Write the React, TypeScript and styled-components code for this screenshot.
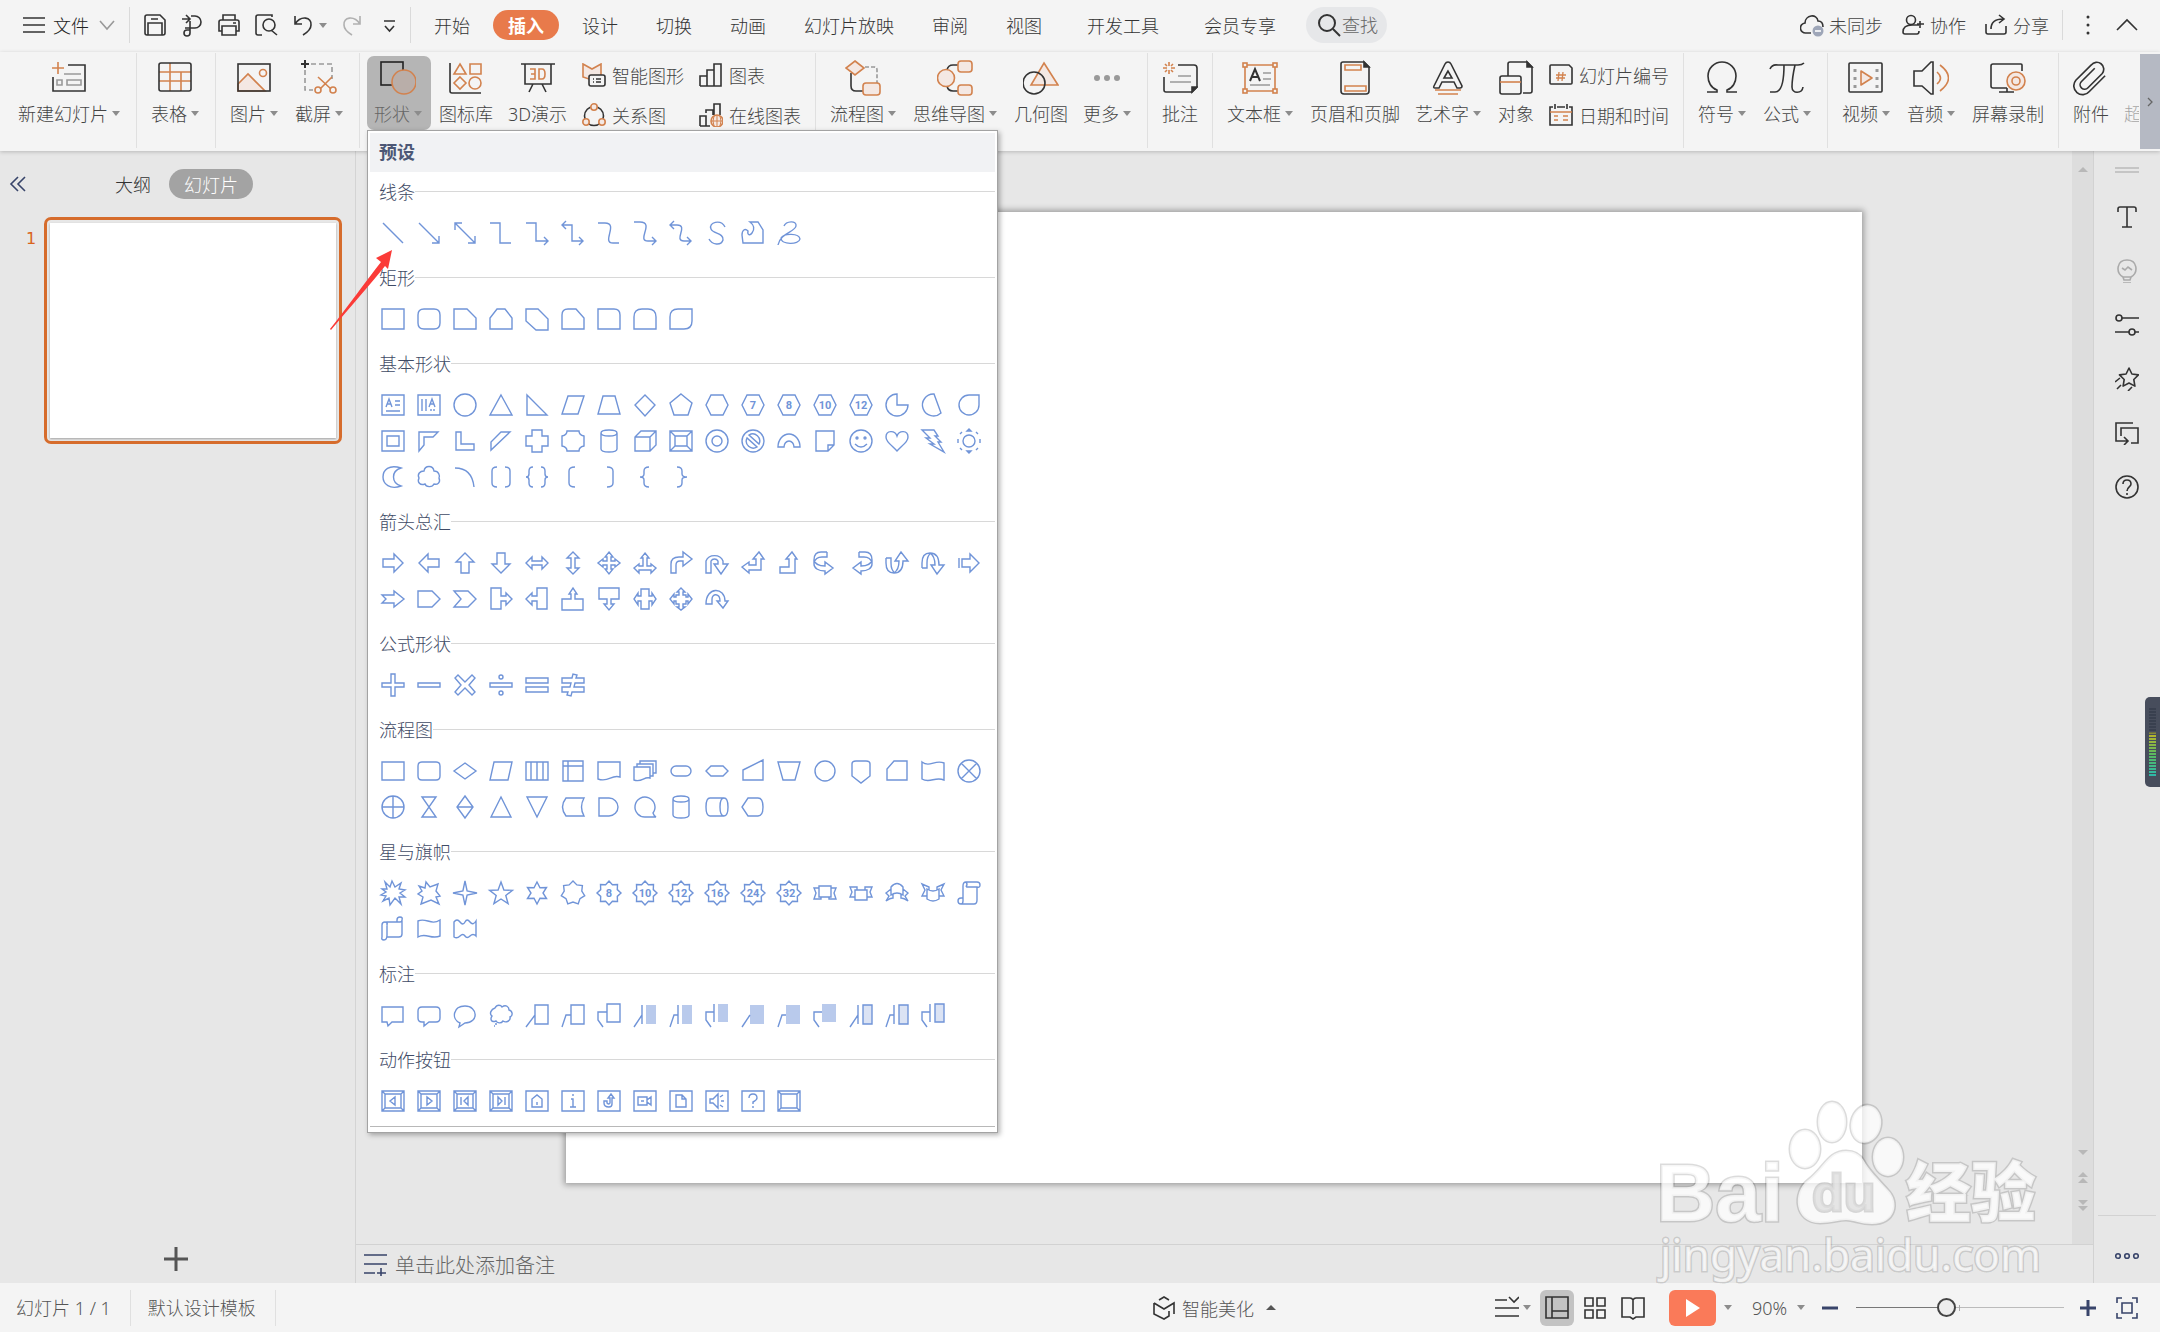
import React from "react";
import styled, { createGlobalStyle } from "styled-components";

const font = `"Noto Sans", "Noto Sans CJK SC", sans-serif`;
const dark = "#333333";
const orange = "#d2824e";
const soft = "#f4e8e3";
const gray = "#999999";
const blue = "#7094d8";
const navy = "#38446a";

const Global = createGlobalStyle`
  *, *::before, *::after { box-sizing: border-box; }
  body { margin: 0; background: #e7e7e7; font-family: ${font}; font-size: 18px; font-weight: 300; color: #444; }
  button, input, select { font: inherit; color: inherit; background: none; border: 0; padding: 0; margin: 0; }
  button { cursor: pointer; white-space: nowrap; }
  svg { display: block; flex: none; }
`;

/* ---------- shared pieces ---------- */

const Shell = styled.div`
  position: relative;
  display: flex;
  flex-direction: column;
  min-height: 100vh;
  overflow-x: clip;
`;

const Caret = styled.span<{ $up?: boolean; $color?: string; $half?: number }>`
  flex: none;
  width: 0;
  height: 0;
  border: ${(p) => p.$half ?? 4}px solid transparent;
  border-bottom-width: ${(p) => (p.$up ? 5 : 0)}px;
  border-top-width: ${(p) => (p.$up ? 0 : 5)}px;
  border-bottom-color: ${(p) => (p.$up ? p.$color ?? "#8c8c8c" : "transparent")};
  border-top-color: ${(p) => (p.$up ? "transparent" : p.$color ?? "#8c8c8c")};
`;

const VRule = styled.span<{ $h: number }>`
  flex: none;
  width: 1px;
  height: ${(p) => p.$h}px;
  background: #dadada;
`;

const IconButton = styled.button<{ $faded?: boolean }>`
  display: flex;
  align-items: center;
  justify-content: center;
  width: 24px;
  height: 24px;
  flex: none;
  opacity: ${(p) => (p.$faded ? 0.35 : 1)};
`;

const Ico = ({ children, s = 24, c = dark, w = 1.6 }: { children: React.ReactNode; s?: number; c?: string; w?: number }) => (
  <svg width={s} height={s} viewBox={`0 0 ${s} ${s}`} fill="none" stroke={c} strokeWidth={w} aria-hidden="true">
    {children}
  </svg>
);

/* ---------- title bar ---------- */

const TitleBar = styled.header`
  display: flex;
  align-items: center;
  height: 52px;
  padding: 0 21px 2px 22px;
  background: #f4f4f4;
`;

const FileButton = styled.button`
  display: flex;
  align-items: center;
  gap: 7px;
  margin-right: 9px;
  color: #222;
`;

const QuickBar = styled.div`
  display: flex;
  align-items: center;
  gap: 13px;
  padding: 0 9px 0 13px;
`;

const UndoGroup = styled.div`
  display: flex;
  align-items: center;
  gap: 4px;
`;

const Tabs = styled.nav<{ $gap: number; $left: number }>`
  display: flex;
  gap: ${(p) => p.$gap}px;
  margin-left: ${(p) => p.$left}px;
`;

const Tab = styled.button<{ $active?: boolean }>`
  height: 30px;
  padding: 0 15px;
  border-radius: 15px;
  color: ${(p) => (p.$active ? "#fff" : "#333")};
  font-weight: ${(p) => (p.$active ? 700 : 300)};
  background: ${(p) => (p.$active ? "#e87a4b" : "transparent")};
`;

const SearchBox = styled.label`
  display: flex;
  align-items: center;
  gap: 1px;
  height: 36px;
  margin-left: 15px;
  padding: 0 9px 0 11px;
  border-radius: 18px;
  background: #e6e7e9;
  input { width: 36px; outline: 0; }
  input::placeholder { color: #666; opacity: 1; }
`;

const AccountBar = styled.div`
  display: flex;
  align-items: center;
  gap: 18px;
  margin-left: auto;
  margin-right: 13px;
`;

const AccountButton = styled.button`
  display: flex;
  align-items: center;
  gap: 5px;
`;

const WindowBar = styled.div`
  display: flex;
  gap: 15px;
  margin-left: 13px;
`;

/* ---------- ribbon ---------- */

const RibbonBar = styled.div`
  position: relative;
  z-index: 5;
  display: flex;
  height: 99px;
  padding-top: 1px;
  background: #f4f4f4;
  box-shadow: 0 1px 4px rgba(0, 0, 0, 0.2);
`;

const Group = styled.div<{ $first?: boolean; $last?: boolean }>`
  display: flex;
  align-items: flex-start;
  gap: 1px;
  height: 95px;
  padding: 3px 7px 0 ${(p) => (p.$first ? 11 : 7)}px;
  border-right: ${(p) => (p.$last ? 0 : 1)}px solid #e0e0e0;
  flex: ${(p) => (p.$last ? "1 1 0" : "none")};
  min-width: 0;
  overflow: ${(p) => (p.$last ? "hidden" : "visible")};
`;

const BigButton = styled.button<{ $caret?: boolean; $active?: boolean; $faded?: boolean }>`
  display: flex;
  flex-direction: column;
  align-items: center;
  flex: none;
  height: 74px;
  padding: 4px ${(p) => (p.$caret ? 9 : 7)}px 0 7px;
  border-radius: 7px;
  color: ${(p) => (p.$active ? "#666" : "#444")};
  background: ${(p) => (p.$active ? "#b5b5b5" : "transparent")};
  opacity: ${(p) => (p.$faded ? 0.45 : 1)};
`;

const BigLabel = styled.span`
  display: flex;
  align-items: center;
  gap: 4px;
  height: 34px;
`;

const Stack = styled.div`
  display: flex;
  flex-direction: column;
  flex: none;
`;

const SmallButton = styled.button`
  display: flex;
  align-items: center;
  gap: 6px;
  height: 40px;
  padding: 0 7px 2px;
  color: #444;
`;

const MenuAnchor = styled.div`
  position: relative;
`;

const RibbonScroll = styled.button`
  width: 20px;
  height: 95px;
  margin: 1px 0 0 1px;
  display: flex;
  align-items: center;
  justify-content: center;
  background: #b5b9c3;
`;

const ribbonIcons: Record<string, React.ReactNode> = {
  newSlide: (
    <Ico s={36}>
      <path d="M17 5H34V31H2V17" />
      <path d="M7 2V14M1 8H13" stroke={orange} />
      <path d="M13 14H30M6 20H11V25H6ZM16 20H30V25H16Z" stroke={gray} />
    </Ico>
  ),
  table: (
    <Ico s={36}>
      <path d="M13 3V31M2 12H34M2 21H34M24 12V31" stroke={orange} />
      <rect x="2" y="3" width="32" height="28" rx="2" />
    </Ico>
  ),
  picture: (
    <Ico s={36}>
      <path d="M2 24L12 14L29 31H2Z" stroke={orange} fill={soft} />
      <circle cx="27" cy="13" r="3.5" stroke={orange} />
      <rect x="2" y="4" width="32" height="27" />
    </Ico>
  ),
  screenshot: (
    <Ico s={36}>
      <path d="M10 4H31V19M4 10V30H12" stroke={gray} strokeDasharray="5 3" />
      <path d="M4 0V8M0 4H8" strokeWidth="2" />
      <path d="M17 17L30 29M31 17L19 29" stroke={orange} />
      <circle cx="17" cy="30" r="3" stroke={orange} />
      <circle cx="32" cy="30" r="3" stroke={orange} />
    </Ico>
  ),
  shapes: (
    <Ico s={36} c="#222">
      <rect x="1" y="2" width="22" height="23" />
      <circle cx="24" cy="22" r="12" stroke={orange} fill="#b9aea9" />
    </Ico>
  ),
  iconLib: (
    <Ico s={36}>
      <path d="M2 3V31Q2 33 4 33H33" />
      <path d="M12 4L18 14H6ZM22 4H33V14H22ZM12 17L18 23L12 29L6 23Z" stroke={orange} />
      <circle cx="27" cy="23" r="6" stroke={orange} />
    </Ico>
  ),
  demo3d: (
    <Ico s={36}>
      <path d="M1 4H35M5 4V24H31V4M13 24L9 32M22 24L26 32" />
      <path d="M10 9H15V19H10M11 14H15M19 9H22Q25 9 25 14T22 19H19Z" stroke={orange} />
    </Ico>
  ),
  smart: (
    <Ico>
      <path d="M1 1L10 6L19 1V14L10 17L1 14Z" stroke={orange} fill={soft} />
      <rect x="7" y="12" width="16" height="11" rx="2" fill="#f4f4f4" />
      <path d="M11 16H12M14 16H19M11 19H12M14 19H19" />
    </Ico>
  ),
  relation: (
    <Ico>
      <circle cx="12" cy="13" r="9.5" />
      {[[12, 4], [4, 19], [20, 19]].map(([x, y]) => (
        <circle key={x} cx={x} cy={y} r="3.2" stroke={orange} fill={soft} />
      ))}
    </Ico>
  ),
  chart: (
    <Ico>
      <path d="M1 23V13H8V23M8 23V7H15V23M15 23V1H22V23ZM1 23H22" />
    </Ico>
  ),
  onlineChart: (
    <Ico>
      <path d="M1 23V13H7V23M7 10V7H14V12M15 12V1H21V12M1 23H11" />
      <circle cx="18" cy="18" r="6" stroke={orange} fill={soft} />
      <path d="M12 18H24M18 12V24M15 13Q13 18 15 23M21 13Q23 18 21 23" stroke={orange} strokeWidth="1" />
    </Ico>
  ),
  flow: (
    <Ico s={36}>
      <path d="M6 13V26Q6 31 11 31H18" />
      <path d="M20 7H29Q32 7 32 10V23" stroke={gray} strokeDasharray="4 2" />
      <path d="M10 1L19 8L10 15L1 8Z" stroke={orange} fill={soft} />
      <rect x="18" y="23" width="17" height="12" rx="3" stroke={orange} fill={soft} />
    </Ico>
  ),
  mind: (
    <Ico s={36}>
      <path d="M10 10Q11 5 16 5H21M10 26Q11 31 16 31H21" />
      <circle cx="9" cy="18" r="8.5" stroke={orange} fill={soft} />
      <rect x="21" y="1" width="14" height="11" rx="3" stroke={orange} fill={soft} />
      <rect x="21" y="25" width="14" height="10" rx="3" stroke={orange} fill={soft} />
    </Ico>
  ),
  geometry: (
    <Ico s={36}>
      <path d="M21 3L35 25H8Z" stroke={orange} fill={soft} />
      <circle cx="11" cy="23" r="11" />
    </Ico>
  ),
  more: (
    <Ico s={36}>
      {[8, 18, 28].map((x) => (
        <circle key={x} cx={x} cy="18" r="3" fill={gray} stroke="none" />
      ))}
    </Ico>
  ),
  comment: (
    <Ico s={36}>
      <path d="M16 5H32Q35 5 35 8V27L30 32H4Q2 32 2 30V17" />
      <path d="M35 27H30V32Z" fill={dark} />
      <path d="M16 16H29M8 22H29" stroke={gray} />
      <path d="M7 2V6M7 10V14M1 8H5M9 8H13M3 4L5 6M9 10L11 12M11 4L9 6M5 10L3 12" stroke={orange} />
    </Ico>
  ),
  textBox: (
    <Ico s={36}>
      <path d="M3 5H33V31H3Z" stroke={orange} />
      {[[3, 5], [33, 5], [3, 31], [33, 31]].map(([x, y]) => (
        <rect key={`${x}${y}`} x={x - 2} y={y - 2} width="4" height="4" stroke={orange} fill="#f4f4f4" />
      ))}
      <path d="M8 21L13 9L18 21M10 17H16" strokeWidth="2" />
      <path d="M21 13H29M21 19H29M8 25H28" stroke={gray} />
    </Ico>
  ),
  headerFooter: (
    <Ico s={36}>
      <path d="M6 2H27L32 7V31Q32 34 29 34H7Q4 34 4 31V4Q4 2 6 2Z" />
      <path d="M27 2V7H32Z" fill={dark} />
      <path d="M8 5H24V10H8ZM8 26H29V31H8Z" stroke={orange} />
    </Ico>
  ),
  wordArt: (
    <Ico s={36}>
      <path d="M18 2Q20 2 21 4L32 26Q32 28 30 28H27L24 22H12L9 28H5Q3 28 4 26L15 4Q16 2 18 2ZM18 11L14 18H22Z" />
      <path d="M5 30H31M8 34H28" stroke={orange} />
    </Ico>
  ),
  object: (
    <Ico s={36}>
      <path d="M10 16V4Q10 2 12 2H29L34 7V31Q34 33 32 33H25" />
      <path d="M29 2V7H34Z" fill={dark} />
      <rect x="2" y="16" width="21" height="18" rx="2" />
      <path d="M2 22H23" stroke={orange} />
    </Ico>
  ),
  slideNo: (
    <Ico>
      <path d="M2 2H20L23 5V20Q23 21 22 21H2Q1 21 1 20V3Q1 2 2 2Z" />
      <path d="M10 9L9 18M14 9L13 18M7 12H17M7 15H16" stroke={orange} strokeWidth="1.3" />
    </Ico>
  ),
  date: (
    <Ico>
      <path d="M4 4H1V22H23V4H20M8 4H16M6 1V6M18 1V6" />
      <path d="M1 9H23M5 13H9M14 13H19M5 17H9M14 17H19" stroke={orange} />
    </Ico>
  ),
  omega: (
    <Ico s={36}>
      <path d="M3 32H13V30C7 28 4 22 4 16A14 14 0 0 1 32 16C32 22 29 28 23 30V32H33" />
    </Ico>
  ),
  pi: (
    <Ico s={36}>
      <path d="M1 9Q3 4 9 5H29Q33 5 35 3M15 5C15 18 13 32 6 32H1M26 5C24 14 23 22 23 27C23 34 33 34 34 27" />
    </Ico>
  ),
  video: (
    <Ico s={36}>
      <rect x="1" y="3" width="33" height="29" rx="1" />
      <path d="M13 11L24 18L13 25Z" stroke={orange} fill={soft} strokeLinejoin="round" />
      <path d="M7 9V28M29 9V28" stroke={gray} strokeWidth="3" strokeDasharray="3 5" />
    </Ico>
  ),
  audio: (
    <Ico s={36}>
      <path d="M1 11H9L18 2H20V34H18L9 26H1Z" />
      <path d="M24 12Q31 18 24 24M27 5Q44 18 27 31" stroke={orange} />
    </Ico>
  ),
  record: (
    <Ico s={36}>
      <path d="M32 11V5Q32 4 31 4H3Q1 4 1 6V26Q1 28 3 28H17M9 32H24M17 28V32" />
      <circle cx="26" cy="21" r="9" stroke={orange} fill={soft} />
      <circle cx="26" cy="21" r="4" stroke={orange} />
    </Ico>
  ),
  clip: (
    <svg width="36" height="36" viewBox="0 0 24 24" fill="none" stroke={dark} strokeWidth="1.1" aria-hidden="true">
      <path d="m22.4 9.5-10.5 10.5a5.500 5.500 0 0 1-9-7.500l10.300-10.200A4.500 4.500 0 0 1 20.500 8l-9.500 9.500a3 3 0 0 1-4.500-4l9-9" transform="translate(-1 1)" />
    </svg>
  ),
  link: (
    <Ico s={36} c={gray}>
      <path d="M22 11A7 7 0 0 0 10 11V22" />
    </Ico>
  ),
};

type BigProps = { icon: string; label: string; caret?: boolean; faded?: boolean; active?: boolean };

const Big = ({ icon, label, caret, faded, active }: BigProps) => (
  <BigButton $caret={caret} $faded={faded} $active={active} aria-expanded={active}>
    {ribbonIcons[icon]}
    <BigLabel>
      {label}
      {caret && <Caret />}
    </BigLabel>
  </BigButton>
);

const Small = ({ items }: { items: [string, string][] }) => (
  <Stack>
    {items.map(([icon, label]) => (
      <SmallButton key={icon}>
        {ribbonIcons[icon]}
        {label}
      </SmallButton>
    ))}
  </Stack>
);

/* ---------- shape gallery ---------- */

type Shape = string | { d: string; t?: string; soft?: string; pale?: boolean; turn?: number; mirror?: "x" | "y" };

const star = (n: number, outer: number, inner: number, cx = 12, cy = 12) =>
  "M" +
  Array.from({ length: n * 2 }, (_, i) => {
    const r = i % 2 ? inner : outer;
    const a = (Math.PI * i) / n - Math.PI / 2;
    return `${(cx + r * Math.cos(a)).toFixed(1)} ${(cy + r * Math.sin(a)).toFixed(1)}`;
  }).join("L") +
  "Z";
const ring = (cx: number, cy: number, rx: number, ry = rx) =>
  `M${cx - rx} ${cy}a${rx} ${ry} 0 1 0 ${rx * 2} 0a${rx} ${ry} 0 1 0 ${-rx * 2} 0Z`;

const hexagon = "M6 2H18L23 12L18 22H6L1 12Z";
const badge = star(8, 12, 9);
const right = "M2 8H13V3L22 12L13 21V16H2Z";
const leftRight = "M1 12L7 6V10H17V6L23 12L17 18V14H7V18Z";
const bent = "M2 22V13Q2 6 10 6H14V1L23 8L14 15V10H11Q7 10 7 14V22Z";
const uturn = "M1 22V10A9 8 0 0 1 18 10V13H23L16 23L9 13H13V10A4 4 0 0 0 6 10V22Z";
const curved = "M14 1H8C3 1 1 4 1 9V13C1 17 5 20 12 20V23L20 17L12 11V15C6 15 2 13 1 9M14 1V6H9C5 6 2 8 1 12";
const swoop = "M1 7V12C1 19 4 22 9 22C15 22 18 18 18 10H23L16 1L10 10H14C14 15 12 20 9 22M1 7H6V12C6 17 7 20 10 22";
const frame = "M1 2H23V22H1ZM4 5H20V19H4ZM1 2L4 5M23 2L20 5M1 22L4 19M23 22L20 19";
const plain = "M1 2H23V22H1Z";
const scroll = "M6 20V5Q6 1 9 1H20Q23 1 23 4T20 6H9M20 6V19Q20 23 17 23H4Q1 23 1 20T4 17H6M6 20Q6 23 4 23M9 6Q11 3 9 1";
const sidePlug = "M2 1H12V9H17V6L23 12L17 18V14H12V22H2Z";

const sections: [string, Shape[]][] = [
  ["线条", [
    "M2 2L22 22",
    "M2 2L22 22M22 15V22H15",
    "M2 2L22 22M22 15V22H15M2 9V2H9",
    "M1 2H11V22H22",
    "M1 2H11V20H23M19 16L23 20L19 24",
    "M1 4H11V20H22M18 16L22 20L18 24M5 0L1 4L5 8",
    "M1 2H8C22 2 4 22 16 22H22",
    "M1 1H7C22 1 3 20 15 20H23M19 16L23 20L19 24",
    "M1 4H8C20 4 4 20 15 20H22M18 16L22 20L18 24M5 0L1 4L5 8",
    "M20 6C16 -2 3 1 6 8C8 13 19 12 18 19C16 25 7 24 4 18",
    "M2 22H22V9L17 1H9C13 4 14 8 11 12C9 15 6 14 7 10C4 7 1 9 1 14Z",
    "M7 5C9 0 20 -1 19 5C18 11 3 12 1 24M4 17C7 12 22 12 23 18C22 24 4 24 4 17Z",
  ]],
  ["矩形", [
    plain,
    "M7 2H17Q23 2 23 8V16Q23 22 17 22H7Q1 22 1 16V8Q1 2 7 2Z",
    "M1 2H14L23 11V22H1Z",
    "M1 22V11L8 2H16L23 11V22Z",
    "M1 2H13L23 12V23H11L1 14Z",
    "M1 22V8Q1 2 7 2H15L23 11V22Z",
    "M1 2H17Q23 2 23 8V22H1Z",
    "M1 22V10Q1 2 9 2H15Q23 2 23 10V22Z",
    "M1 22V10Q1 2 9 2H23V14Q23 22 15 22Z",
  ]],
  ["基本形状", [
    plain + "M5 14L8 6L11 14M6 11H10M14 8H19M14 12H19M5 18H19",
    plain + "M5 6V18M9 6V18M12 14L15 6L18 14M13 11H17M14 16V18M17 16V18",
    ring(12, 12, 11),
    "M12 2L23 22H1Z",
    "M2 2L22 22H2Z",
    "M7 3H23L17 21H1Z",
    "M6 3H18L23 21H1Z",
    "M12 2L22 12L12 23L2 12Z",
    "M12 1L23 10L19 22H5L1 10Z",
    hexagon,
    { d: hexagon, t: "7" },
    { d: hexagon, t: "8" },
    { d: hexagon, t: "10" },
    { d: hexagon, t: "12" },
    "M12 1A11 11 0 1 0 23 12H12Z",
    "M13 1A11 11 0 1 0 20 20Z",
    "M22 2V12A10 10 0 1 1 12 2Z",
    "M1 2H23V22H1ZM6 7H18V17H6Z",
    "M2 3H21L16 8H7V16L2 22Z",
    "M3 3H8V15H21V21H3Z",
    "M12 3H21L2 21V13Z",
    "M7 1H17V7H23V17H17V23H7V17H1V7H7Z",
    "M6 2H18Q18 6 23 7V17Q18 18 18 22H6Q6 18 1 17V7Q6 6 6 2Z",
    "M4 4V20Q4 23 12 23T20 20V4Q20 1 12 1T4 4Q4 7 12 7T20 4",
    "M2 8L8 2H23V16L17 22H2ZM2 8H17V22M17 8L23 2",
    "M1 2H23V22H1ZM6 7H18V17H6ZM1 2L6 7M23 2L18 7M1 22L6 17M23 22L18 17",
    ring(12, 12, 11) + ring(12, 12, 5),
    ring(12, 12, 11) + "M6 9A7 7 0 0 0 16 18ZM8 6A7 7 0 0 1 18 15Z",
    "M1 18A11 13 0 0 1 23 18H17A5 6 0 0 0 7 18Z",
    "M3 2H21V16L15 22H3ZM21 16H15V22",
    ring(12, 12, 11) + ring(8, 9, 1) + ring(16, 9, 1) + "M6 15Q12 21 18 15",
    "M12 22C4 14 1 12 1 8C1 1 10 1 12 7C14 1 23 1 23 8C23 12 20 14 12 22Z",
    "M1 1H13L17 7H14L20 13H17L23 23L9 15H13L5 9H9Z",
    ring(12, 12, 6) + "M10 2L12 0L14 2ZM10 22L12 24L14 22ZM1 10V14M23 10V14M3 5L5 3M19 3L21 5M3 19L5 21M19 21L21 19",
    "M20 3C8 -1 2 5 2 12S9 25 20 21C10 18 10 6 20 3Z",
    "M7 6C8 0 16 0 17 6C22 6 23 11 22 13C24 18 20 20 17 19C15 23 9 22 8 19C3 21 0 17 2 13C0 9 3 6 7 6Z",
    "M2 3Q19 3 21 22",
    "M8 2Q3 2 3 6V18Q3 22 8 22M16 2Q21 2 21 6V18Q21 22 16 22",
    "M8 2Q4 2 4 6V9Q4 12 1 12Q4 12 4 15V18Q4 22 8 22M16 2Q20 2 20 6V9Q20 12 23 12Q20 12 20 15V18Q20 22 16 22",
    "M14 2Q8 2 8 6V18Q8 22 14 22",
    "M10 2Q16 2 16 6V18Q16 22 10 22",
    "M16 2Q11 2 11 6V9Q11 12 7 12Q11 12 11 15V18Q11 22 16 22",
    "M8 2Q13 2 13 6V9Q13 12 18 12Q13 12 13 15V18Q13 22 8 22",
  ]],
  ["箭头总汇", [
    right,
    { d: right, turn: 180 },
    { d: right, turn: 270 },
    { d: right, turn: 90 },
    leftRight,
    { d: leftRight, turn: 90 },
    "M12 1L16 6H14V10H18V8L23 12L18 16V14H14V18H16L12 23L8 18H10V14H6V16L1 12L6 8V10H10V6H8Z",
    "M12 2L16 7H14V15H18V13L23 17L18 22V19H6V22L1 17L6 13V15H10V7H8Z",
    bent,
    uturn,
    "M18 1L23 8H20V19H8V22L1 16L8 11V14H15V8H12Z",
    "M15 1L20 8H18V22H3V16H12V8H9Z",
    curved,
    { d: curved, mirror: "x" },
    swoop,
    { d: swoop, mirror: "y" },
    "M2 7V17M5 8V16H13V21L22 12L13 3V8Z",
    "M1 8H13V4L23 12L13 20V16H1L5 12Z",
    "M1 4H15L23 12L15 20H1Z",
    "M1 4H15L23 12L15 20H1L8 12Z",
    sidePlug,
    { d: sidePlug, mirror: "x" },
    "M1 12H10V7H8L12 1L16 7H14V12H22V23H1Z",
    "M2 1H22V12H14V17H17L12 23L7 17H10V12H2Z",
    "M8 2H16V9H19V6L23 12L19 18V14H16V22H8V14H5V18L1 12L5 6V9H8Z",
    "M12 1L16 5H14V8H17V10H19V7L23 12L19 17V14H17V17H14V20H16L12 23L8 20H10V17H7V14H5V17L1 12L5 7V10H7V8H10V5H8Z",
    "M1 17C1 -1 20 0 20 14H23L18 21L12 14H15C15 6 7 6 7 12V17Z",
  ]],
  ["公式形状", [
    "M10 1H14V10H23V14H14V23H10V14H1V10H10Z",
    "M1 10H23V14H1Z",
    "M5 2L12 9L19 2L22 5L16 12L22 19L19 22L12 15L5 22L2 19L8 12L2 5Z",
    "M1 10H23V14H1Z" + ring(12, 4, 2) + ring(12, 20, 2),
    "M1 5H23V10H1ZM1 14H23V19H1Z",
    "M1 5H11L12 1L16 2L15 5H23V10H14L13 14H23V19H11L10 23L6 22L7 19H1V14H9L10 10H1Z",
  ]],
  ["流程图", [
    "M1 3H23V21H1Z",
    "M5 3H19Q23 3 23 7V17Q23 21 19 21H5Q1 21 1 17V7Q1 3 5 3Z",
    "M12 4L23 12L12 20L1 12Z",
    "M5 3H23L19 21H1Z",
    "M1 3H23V21H1ZM6 3V21M18 3V21M12 3V21",
    "M2 2H22V22H2ZM7 2V22M2 7H22",
    "M1 3H23V18C14 15 12 24 1 20Z",
    "M1 8H17V19C11 17 9 24 1 21ZM4 8V5H20V17H17M7 5V2H23V14H20",
    "M7 7H17A5 5 0 0 1 17 17H7A5 5 0 0 1 7 7Z",
    "M6 7H18L23 12L18 17H6L1 12Z",
    "M2 11L22 1V21H2Z",
    "M1 3H23L18 21H6Z",
    ring(12, 12, 10),
    "M3 5Q3 2 7 2H17Q21 2 21 5V17L12 24L3 17Z",
    "M9 2H22V21H2V10Z",
    "M1 3C9 9 14 0 23 4V21C14 17 9 25 1 20Z",
    ring(12, 12, 11) + "M4 4L20 20M20 4L4 20",
    ring(12, 12, 11) + "M12 1V23M1 12H23",
    "M5 2H19L5 22H19Z",
    "M12 1L20 12L12 23L4 12ZM4 12H20",
    "M12 2L22 22H2Z",
    "M2 2H22L12 22Z",
    "M5 3H23Q18 12 23 21H5Q-2 12 5 3Z",
    "M2 3H12A9 9 0 0 1 12 21H2Z",
    "M13 22A10 10 0 1 1 20 18Q21 21 23 22Z",
    "M4 4V20Q4 23 12 23T20 20V4Q20 1 12 1T4 4Q4 7 12 7T20 4",
    "M5 3H19Q23 3 23 12T19 21H5Q1 21 1 12T5 3M19 3Q15 3 15 12T19 21",
    "M7 3H17Q22 3 22 12T17 21H7L1 12Z",
  ]],
  ["星与旗帜", [
    "M4 1L9 6L11 0L14 6L20 2L18 8L24 9L19 12L24 16L18 16L20 23L14 17L9 24L8 17L2 20L5 15L0 14L5 11L1 8L6 8Z",
    "M9 1L13 6L21 3L19 10L23 15L19 16L22 23L14 19L4 23L6 16L1 13L5 10L2 5L8 7Z",
    star(4, 12, 3),
    star(5, 12, 5, 12, 13),
    star(6, 11, 6),
    star(7, 12, 9),
    { d: badge, t: "8" },
    { d: badge, t: "10" },
    { d: badge, t: "12" },
    { d: badge, t: "16" },
    { d: badge, t: "24" },
    { d: badge, t: "32" },
    "M6 5H18V16H6ZM6 7H1L3 12L1 18H8V16M18 7H23L21 12L23 18H16V16",
    "M6 9H18V19H6ZM8 9V6H1L3 11L1 16H6M16 9V6H23L21 11L23 16H18",
    "M6 6Q12 -1 18 6V14Q12 10 6 14ZM6 8L1 12L4 15L1 20Q5 17 8 17V13M18 8L23 12L20 15L23 20Q19 17 16 17V13",
    "M6 8Q12 12 18 8V18Q12 22 6 18ZM8 9V6L1 3L4 9L1 15L6 15M16 9V6L23 3L20 9L23 15L18 15",
    scroll,
    "M6 5V18Q6 23 3 23T1 20V8Q1 5 4 5T6 8V5H16V3Q16 0 19 0T21 3V17Q21 20 18 20H6M16 5H19Q21 5 21 3",
    "M1 4C9 0 14 9 23 3V19C14 23 9 15 1 20Z",
    "M1 5Q4 1 7 5T12 5T17 5T23 4V19Q20 16 17 19T12 19T7 19T1 20Z",
  ]],
  ["标注", [
    "M1 4H22V19H11L7 23L6 19H1Z",
    "M5 4H19Q23 4 23 8V15Q23 19 19 19H12L7 23L7 19H5Q1 19 1 15V8Q1 4 5 4Z",
    "M7 20C-2 16 0 3 12 3C25 3 26 20 12 20L6 24Z",
    "M6 5C8 1 12 2 13 4C17 1 20 4 20 7C24 8 24 13 21 14C22 18 17 20 14 18C12 21 8 20 7 18C2 20 1 16 3 13C0 11 2 6 6 5ZM6 21H8M5 23H6",
    "M10 2H23V21H10ZM1 24L10 12",
    "M10 2H23V21H10ZM10 12H5L1 24",
    "M10 1H23V19H10ZM10 9H1V17L6 24",
    { d: "M9 2V21M1 24L9 12", soft: "M13 2H23V21H13Z" },
    { d: "M9 2V21M9 12H5L1 24", soft: "M13 2H23V21H13Z" },
    { d: "M9 1V19M9 9H1V17L6 24", soft: "M13 1H23V19H13Z" },
    { d: "M1 24L9 12", soft: "M9 2H23V21H9Z" },
    { d: "M9 12H5L1 24", soft: "M9 2H23V21H9Z" },
    { d: "M9 9H1V17L6 24", soft: "M9 1H23V19H9Z" },
    { d: "M9 2V21M1 24L9 12M14 2H23V21H14Z", soft: "M14 2H23V21H14Z", pale: true },
    { d: "M9 2V21M9 12H5L1 24M14 2H23V21H14Z", soft: "M14 2H23V21H14Z", pale: true },
    { d: "M9 1V19M9 9H1V17L6 24M14 1H23V19H14Z", soft: "M14 1H23V19H14Z", pale: true },
  ]],
  ["动作按钮", [
    frame + "M14 8V16L9 12Z",
    frame + "M10 8V16L15 12Z",
    frame + "M8 8V16M15 8V16L11 12Z",
    frame + "M16 8V16M9 8V16L13 12Z",
    plain + "M7 18V10L12 6L17 10V18ZM12 13V16",
    plain + "M12 5V7M10 10H12V18M9 18H15",
    plain + "M12 18Q7 18 7 14V12H10V14Q12 16 13 14V9H11L14 5L17 9H15V15Q15 18 12 18Z",
    plain + "M5 8H14V16H5ZM14 11L18 8V16L14 13M8 12H11",
    plain + "M7 6H13L17 10V18H7ZM13 6V10H17",
    plain + "M5 10H8L13 5V19L8 14H5ZM15 8L18 6M16 12H19M15 16L18 18",
    plain + "M8 9Q8 5 12 5T16 9Q16 11 12 13V15M12 17V19",
    frame,
  ]],
];

const Menu = styled.div`
  position: absolute;
  top: 100%;
  left: 0;
  width: 631px;
  padding: 2px 2px 5px;
  border: 1px solid #a3a3a3;
  background: #fff;
  box-shadow: 2px 2px 5px rgba(0, 0, 0, 0.3);
`;

const MenuTitle = styled.h2`
  margin: 0;
  padding-left: 9px;
  height: 39px;
  line-height: 39px;
  font-size: 18px;
  font-weight: 700;
  color: #4c5775;
  background: #f1f2f4;
`;

const Section = styled.section`
  padding-bottom: 7px;
`;

const SectionTitle = styled.h3`
  display: flex;
  align-items: center;
  height: 43px;
  margin: 0;
  padding: 0 0 6px 9px;
  font-size: 18px;
  font-weight: 300;
  color: #3f4b66;
  &::after { content: ""; flex: 1; height: 1px; margin-top: 2px; background: #d8d8d8; }
`;

const ShapeGrid = styled.div`
  display: grid;
  grid-template-columns: repeat(17, 36px);
  grid-auto-rows: 36px;
  padding-left: 5px;
`;

const ShapeButton = styled.button`
  display: flex;
  align-items: center;
  justify-content: center;
`;

const MenuEnd = styled.div`
  height: 1px;
  background: #b8b8b8;
`;

const Pointer = styled.svg`
  position: absolute;
  left: -40px;
  top: 118px;
`;

const ShapeIcon = ({ shape }: { shape: Shape }) => {
  const s = typeof shape === "string" ? { d: shape } : shape;
  const transform = s.turn
    ? `rotate(${s.turn} 12 12)`
    : s.mirror === "x"
      ? "translate(24 0) scale(-1 1)"
      : s.mirror === "y"
        ? "translate(0 24) scale(1 -1)"
        : undefined;
  return (
    <svg width="24" height="24" viewBox="0 0 24 24" overflow="visible" fill="none" stroke={blue} strokeWidth="1.4" aria-hidden="true">
      {s.soft && <path d={s.soft} fill={s.pale ? "#dbe3f4" : "#b9caec"} stroke="none" />}
      <path d={s.d} transform={transform} />
      {s.t && (
        <text x="12" y="16" textAnchor="middle" fontFamily="Roboto, sans-serif" fontWeight="700" fontSize="11" fill={blue} stroke="none">
          {s.t}
        </text>
      )}
    </svg>
  );
};

const ShapeMenu = () => (
  <Menu>
    <MenuTitle>预设</MenuTitle>
    {sections.map(([name, shapes]) => (
      <Section key={name}>
        <SectionTitle>{name}</SectionTitle>
        <ShapeGrid>
          {shapes.map((shape, i) => (
            <ShapeButton key={i} aria-label={`${name} ${i + 1}`}>
              <ShapeIcon shape={shape} />
            </ShapeButton>
          ))}
        </ShapeGrid>
      </Section>
    ))}
    <MenuEnd />
    <Pointer width="70" height="84" viewBox="0 0 70 84" aria-hidden="true">
      <path d="M64 1L48 9L53 13C38 32 18 60 2 80L3 81C22 58 42 36 57 17L60 20Z" fill="#fb3b38" />
    </Pointer>
  </Menu>
);

/* ---------- work area ---------- */

const Work = styled.main`
  flex: 1;
  display: grid;
  grid-template-columns: 356px minmax(0, 1fr) 66px;
  background: #e7e7e7;
`;

const SlidePanel = styled.aside`
  display: flex;
  flex-direction: column;
  border-right: 1px solid #d4d4d4;
`;

const PanelHead = styled.div`
  display: flex;
  align-items: center;
  padding: 18px 0 0 6px;
`;

const PanelTab = styled.button<{ $active?: boolean }>`
  height: 30px;
  padding: 0 15px;
  border-radius: 15px;
  color: ${(p) => (p.$active ? "#fff" : "#333")};
  background: ${(p) => (p.$active ? "#a3a3a3" : "transparent")};
`;

const PanelTabs = styled.div`
  display: flex;
  gap: 3px;
  margin-left: 70px;
`;

const ThumbRow = styled.div`
  display: flex;
  padding: 18px 13px 0 26px;
`;

const ThumbNumber = styled.span`
  width: 18px;
  padding-top: 12px;
  font-family: "DejaVu Sans", sans-serif;
  font-size: 16px;
  font-weight: 400;
  line-height: 20px;
  color: #d9641c;
`;

const Thumb = styled.button`
  flex: 1;
  height: 227px;
  padding: 3px;
  border: 3px solid #d66c2c;
  border-radius: 7px;
`;

const ThumbPage = styled.span`
  display: block;
  height: 100%;
  background: #fff;
  box-shadow: 0 1px 2px rgba(0, 0, 0, 0.3);
`;

const AddSlide = styled.button`
  align-self: center;
  width: 24px;
  height: 24px;
  margin: auto 3px 12px 0;
`;

const Editor = styled.div`
  display: flex;
  flex-direction: column;
`;

const CanvasRow = styled.div`
  flex: 1;
  display: flex;
`;

const Canvas = styled.div`
  flex: 1;
  display: flex;
  padding: 61px 210px;
`;

const Page = styled.div`
  flex: 1;
  background: #fff;
  box-shadow: 0 0 6px 2px rgba(0, 0, 0, 0.32);
`;

const ScrollBar = styled.div`
  display: flex;
  flex-direction: column;
  align-items: center;
  justify-content: space-between;
  width: 22px;
  padding: 16px 0 33px;
  border-right: 1px solid #d2d2d2;
  background: #dddddd;
`;

const ScrollButton = styled.button`
  display: flex;
  flex-direction: column;
  gap: 1px;
`;

const ScrollEnd = styled.div`
  display: flex;
  flex-direction: column;
  gap: 17px;
`;

const Notes = styled.label`
  display: flex;
  align-items: center;
  gap: 8px;
  height: 39px;
  padding: 2px 0 0 7px;
  border-top: 1px solid #d2d2d2;
  border-right: 1px solid #d2d2d2;
  font-size: 20px;
  input { flex: 1; outline: 0; }
  input::placeholder { color: #666; opacity: 1; }
`;

const SideBar = styled.aside`
  display: flex;
  flex-direction: column;
  align-items: center;
  gap: 23px;
  padding-top: 7px;
`;

const SideTools = styled.div`
  display: flex;
  flex-direction: column;
  gap: 30px;
`;

const SideEnd = styled.div`
  display: flex;
  justify-content: center;
  align-self: stretch;
  margin: auto 4px 0;
  padding: 28px 0 15px;
  border-top: 1px solid #d2d2d2;
`;

const Meter = styled.div`
  position: absolute;
  z-index: 4;
  right: 0;
  top: 697px;
  width: 15px;
  height: 90px;
  padding: 10px 4px;
  border-radius: 5px 0 0 5px;
  background: #474d5c;
`;

const MeterBars = styled.div`
  height: 100%;
  background:
    repeating-linear-gradient(#474d5c 0 1px, transparent 1px 3px),
    linear-gradient(#39404f 0 34%, #b5b52c 40%, #55b964 70%, #2bb8ad);
`;

const Watermark = styled.svg`
  position: absolute;
  z-index: 6;
  right: 0;
  bottom: 0;
  pointer-events: none;
`;

/* ---------- status bar ---------- */

const Status = styled.footer`
  display: flex;
  align-items: center;
  height: 49px;
  padding: 0 21px 0 16px;
  background: #f4f4f4;
  color: #555;
`;

const StatusText = styled.span<{ $left?: number }>`
  padding: 0 19px 0 ${(p) => p.$left ?? 0}px;
  border-right: 1px solid #e0e0e0;
  line-height: 36px;
`;

const Beautify = styled.button`
  display: flex;
  align-items: center;
  gap: 6px;
  margin: 0 214px 0 auto;
  & > :last-child { margin-left: 6px; }
`;

const ViewBar = styled.div`
  display: flex;
  align-items: center;
  gap: 4px;
  margin-right: 19px;
`;

const ViewButton = styled.button<{ $active?: boolean }>`
  display: flex;
  align-items: center;
  justify-content: center;
  gap: 4px;
  height: 36px;
  min-width: 34px;
  padding: 0 5px;
  border-radius: 6px;
  background: ${(p) => (p.$active ? "#c3c3c3" : "transparent")};
`;

const PlayButton = styled.button`
  display: flex;
  align-items: center;
  justify-content: center;
  width: 47px;
  height: 36px;
  margin-right: 8px;
  border-radius: 6px;
  background: #fa7a59;
`;

const ZoomPick = styled.div`
  display: flex;
  align-items: center;
  margin: 0 13px 0 20px;
`;

const ZoomSelect = styled.select`
  appearance: none;
  width: 45px;
  outline: 0;
`;

const ZoomRange = styled.input`
  appearance: none;
  width: 208px;
  height: 20px;
  margin: 0 12px 0 14px;
  background:
    linear-gradient(#aaa, #aaa) 103px 50% / 1px 6px no-repeat,
    linear-gradient(90deg, #777 43%, #bbb 43%) center / 100% 1px no-repeat;
  &::-webkit-slider-thumb {
    appearance: none;
    width: 19px;
    height: 19px;
    border: 2px solid #444;
    border-radius: 50%;
    background: #ededed;
  }
`;

const FitSlot = styled.div`
  margin-left: 15px;
`;

export default function App() {
  return (
    <Shell>
      <Global />
      <TitleBar>
        <FileButton>
          <Ico><path d="M1 5H23M1 12H23M1 19H23" /></Ico>
          文件
          <Ico c={gray}><path d="M4 8L11 16L18 8" /></Ico>
        </FileButton>
        <VRule $h={36} />
        <QuickBar>
          <IconButton aria-label="保存"><Ico><path d="M4 2H17L22 7V20Q22 22 20 22H4Q2 22 2 20V4Q2 2 4 2ZM5 22V10H19V22M8 6H15" /></Ico></IconButton>
          <IconButton aria-label="输出"><Ico><path d="M2 6H9M6 2L10 6L6 10M11 3H15A6 6 0 0 1 15 15H5M10 8V20A3 3 0 1 1 7 17H10" /></Ico></IconButton>
          <IconButton aria-label="打印"><Ico><path d="M6 7V2H18V7M5 18H2V9Q2 7 4 7H20Q22 7 22 9V18H19M5 13H19V22H5ZM16 10H19" /></Ico></IconButton>
          <IconButton aria-label="打印预览"><Ico><path d="M8 22H4Q2 22 2 20V4Q2 2 4 2H18V4M17 17L23 22" /><circle cx="15" cy="12" r="6" /></Ico></IconButton>
          <UndoGroup>
            <IconButton aria-label="撤销"><Ico><path d="M4 3V11H11M4 11C10 2 21 4 20 12C20 16 17 19 12 22" /></Ico></IconButton>
            <Caret />
          </UndoGroup>
          <IconButton aria-label="恢复" $faded><Ico><path d="M20 3V11H13M20 11C14 2 3 4 4 12C4 16 7 19 12 22" /></Ico></IconButton>
          <IconButton aria-label="自定义"><Ico><path d="M7 8H18M8 13L12.5 18L17 13" /></Ico></IconButton>
        </QuickBar>
        <VRule $h={36} />
        <Tabs $gap={8} $left={8}>
          {["开始", "插入", "设计", "切换", "动画", "幻灯片放映", "审阅", "视图"].map((t) => (
            <Tab key={t} $active={t === "插入"}>{t}</Tab>
          ))}
        </Tabs>
        <Tabs $gap={15} $left={15}>
          <Tab>开发工具</Tab>
          <Tab>会员专享</Tab>
        </Tabs>
        <SearchBox>
          <Ico w={2}><circle cx="10" cy="10" r="8" /><path d="M16 16L23 23" /></Ico>
          <input aria-label="查找" placeholder="查找" />
        </SearchBox>
        <AccountBar>
          <AccountButton>
            <Ico><path d="M11 20H6A5 5 0 0 1 5 10C5 2 17 0 18 8Q23 8 23 14" /><circle cx="18" cy="18" r="5.5" fill="#9ea6b8" stroke="none" /><path d="M15 18H21" stroke="#fff" /></Ico>
            未同步
          </AccountButton>
          <AccountButton>
            <Ico><circle cx="10" cy="7" r="4.5" /><path d="M18 12H11Q2 12 2 19Q2 21 4 21H16Q18 21 18 18M16 11H23M19 8V15" /></Ico>
            协作
          </AccountButton>
          <AccountButton>
            <Ico><path d="M2 11V19Q2 21 4 21H20Q22 21 22 19V13M7 16Q7 6 19 6M15 2L20 6L15 10" /></Ico>
            分享
          </AccountButton>
        </AccountBar>
        <VRule $h={30} />
        <WindowBar>
          <IconButton aria-label="更多"><Ico>{[4, 12, 20].map((y) => <circle key={y} cx="12" cy={y} r="1.5" fill={dark} stroke="none" />)}</Ico></IconButton>
          <IconButton aria-label="收起功能区"><Ico><path d="M2 17L12 7L22 17" /></Ico></IconButton>
        </WindowBar>
      </TitleBar>

      <RibbonBar>
        <Group $first><Big icon="newSlide" label="新建幻灯片" caret /></Group>
        <Group><Big icon="table" label="表格" caret /></Group>
        <Group>
          <Big icon="picture" label="图片" caret />
          <Big icon="screenshot" label="截屏" caret />
        </Group>
        <Group>
          <MenuAnchor>
            <Big icon="shapes" label="形状" caret active />
            <ShapeMenu />
          </MenuAnchor>
          <Big icon="iconLib" label="图标库" />
          <Big icon="demo3d" label="3D演示" />
          <Small items={[["smart", "智能图形"], ["relation", "关系图"]]} />
          <Small items={[["chart", "图表"], ["onlineChart", "在线图表"]]} />
        </Group>
        <Group>
          <Big icon="flow" label="流程图" caret />
          <Big icon="mind" label="思维导图" caret />
          <Big icon="geometry" label="几何图" />
          <Big icon="more" label="更多" caret />
        </Group>
        <Group><Big icon="comment" label="批注" /></Group>
        <Group>
          <Big icon="textBox" label="文本框" caret />
          <Big icon="headerFooter" label="页眉和页脚" />
          <Big icon="wordArt" label="艺术字" caret />
          <Big icon="object" label="对象" />
          <Small items={[["slideNo", "幻灯片编号"], ["date", "日期和时间"]]} />
        </Group>
        <Group>
          <Big icon="omega" label="符号" caret />
          <Big icon="pi" label="公式" caret />
        </Group>
        <Group>
          <Big icon="video" label="视频" caret />
          <Big icon="audio" label="音频" caret />
          <Big icon="record" label="屏幕录制" />
        </Group>
        <Group $last>
          <Big icon="clip" label="附件" />
          <Big icon="link" label="超链接" faded />
        </Group>
        <RibbonScroll aria-label="向右滚动"><Ico c="#666" w={1.3}><path d="M10 8L14 12L10 16" /></Ico></RibbonScroll>
      </RibbonBar>

      <Work>
        <SlidePanel>
          <PanelHead>
            <IconButton aria-label="折叠"><Ico c={navy} w={1.6}><path d="M12 5L5 12L12 19M19 5L12 12L19 19" /></Ico></IconButton>
            <PanelTabs>
              <PanelTab>大纲</PanelTab>
              <PanelTab $active>幻灯片</PanelTab>
            </PanelTabs>
          </PanelHead>
          <ThumbRow>
            <ThumbNumber>1</ThumbNumber>
            <Thumb aria-label="幻灯片 1"><ThumbPage /></Thumb>
          </ThumbRow>
          <AddSlide aria-label="新建幻灯片"><Ico c="#555" w={3}><path d="M12 0V24M0 12H24" /></Ico></AddSlide>
        </SlidePanel>
        <Editor>
          <CanvasRow>
            <Canvas><Page /></Canvas>
            <ScrollBar>
              <ScrollButton aria-label="向上"><Caret $up $half={5} $color="#b8b8b8" /></ScrollButton>
              <ScrollEnd>
                <ScrollButton aria-label="向下"><Caret $half={5} $color="#b8b8b8" /></ScrollButton>
                <ScrollButton aria-label="上一页"><Caret $up $half={5} $color="#b8b8b8" /><Caret $up $half={5} $color="#b8b8b8" /></ScrollButton>
                <ScrollButton aria-label="下一页"><Caret $half={5} $color="#b8b8b8" /><Caret $half={5} $color="#b8b8b8" /></ScrollButton>
              </ScrollEnd>
            </ScrollBar>
          </CanvasRow>
          <Notes>
            <Ico c={navy} w={1.6}><path d="M1 2H24M1 11H24M1 20H12M14 20H23M18 15V23" /></Ico>
            <input aria-label="备注" placeholder="单击此处添加备注" />
          </Notes>
        </Editor>
        <SideBar>
          <Ico c="#bbb"><path d="M0 10H24M0 14H24" /></Ico>
          <SideTools>
            <IconButton aria-label="文本"><Ico><path d="M3 7V4Q3 2 5 2H19Q21 2 21 4V7M12 2V22M7 22H17" /></Ico></IconButton>
            <IconButton aria-label="灵感"><Ico c="#aaa"><path d="M8 18C0 13 2 1 12 1S24 13 16 18ZM8 18L9 21H15L16 18M8 24H16M7 9L10 11L13 8L17 11" /></Ico></IconButton>
            <IconButton aria-label="属性"><Ico><circle cx="4" cy="5" r="3" /><path d="M7 5H24M0 19H14M20 19H24" /><circle cx="17" cy="19" r="3" /></Ico></IconButton>
            <IconButton aria-label="动画"><Ico><path d={star(5, 10, 5, 14, 11)} strokeLinejoin="round" /><path d="M5 11L0 15M6 18L2 22M17 20L13 24" /></Ico></IconButton>
            <IconButton aria-label="切换"><Ico><path d="M18 2H1V20H12M9 16L13 20L9 24M6 15V7H23V22H16" /></Ico></IconButton>
            <IconButton aria-label="帮助"><Ico><circle cx="12" cy="12" r="11" /><path d="M8 9Q8 5 12 5T16 9C16 12 12 12 12 16M12 18V20" /></Ico></IconButton>
          </SideTools>
          <SideEnd>
            <IconButton aria-label="更多工具"><Ico c={navy}><circle cx="3" cy="12" r="2.3" /><circle cx="12" cy="12" r="2.3" /><circle cx="21" cy="12" r="2.3" /></Ico></IconButton>
          </SideEnd>
        </SideBar>
      </Work>

      <Status>
        <StatusText>幻灯片 1 / 1</StatusText>
        <StatusText $left={17}>默认设计模板</StatusText>
        <Beautify>
          <Ico><path d="M2 7V18L12 23L17 20V15M2 7L12 13L22 7V18M7 4L12 1L17 4" /></Ico>
          智能美化
          <Caret $up $half={5} $color="#555" />
        </Beautify>
        <ViewBar>
          <ViewButton aria-label="显示选项"><Ico><path d="M0 4H12M0 12H24M0 20H24M14 1L19 6L24 1" /></Ico><Caret /></ViewButton>
          <ViewButton $active aria-label="普通视图"><Ico><path d="M1 1H23V22H1ZM7 1V22M7 15H23" /></Ico></ViewButton>
          <ViewButton aria-label="幻灯片浏览"><Ico><path d="M2 2H10V10H2ZM14 2H22V10H14ZM2 14H10V22H2ZM14 14H22V22H14Z" /></Ico></ViewButton>
          <ViewButton aria-label="阅读视图"><Ico><path d="M12 4Q11 2 9 2H1V21H9L12 23L15 21H23V2H15Q13 2 12 4V18" /></Ico></ViewButton>
        </ViewBar>
        <PlayButton aria-label="放映">
          <svg width="14" height="18" viewBox="0 0 14 18" aria-hidden="true"><path d="M0 0L14 9L0 18Z" fill="#fff" /></svg>
        </PlayButton>
        <Caret />
        <ZoomPick>
          <ZoomSelect aria-label="缩放比例"><option>90%</option></ZoomSelect>
          <Caret />
        </ZoomPick>
        <IconButton aria-label="缩小"><Ico c={navy} w={3}><path d="M4 12H20" /></Ico></IconButton>
        <ZoomRange type="range" aria-label="缩放" min={0} max={100} defaultValue={43} />
        <IconButton aria-label="放大"><Ico c={navy} w={3}><path d="M4 12H20M12 4V20" /></Ico></IconButton>
        <FitSlot>
          <IconButton aria-label="适应窗口"><Ico c={navy} w={1.6}><path d="M2 7V2H7M17 2H22V7M22 17V22H17M7 22H2V17M7 7H17V17H7Z" /></Ico></IconButton>
        </FitSlot>
      </Status>

      <Meter aria-hidden="true"><MeterBars /></Meter>

      <Watermark width="520" height="252" viewBox="0 0 520 252" fill="#fff" fillOpacity="0.75" stroke="#000" strokeOpacity="0.14" strokeWidth="3" paintOrder="stroke">
        <text x="16" y="141" fontFamily="Liberation Sans, sans-serif" fontWeight="700" fontSize="82">Bai</text>
        <ellipse cx="165" cy="69" rx="15" ry="19" />
        <ellipse cx="192" cy="42" rx="14" ry="20" />
        <ellipse cx="226" cy="44" rx="15" ry="19" transform="rotate(12 226 44)" />
        <ellipse cx="248" cy="77" rx="15" ry="19" />
        <path d="M206 71C188 71 184 88 168 100C152 112 154 143 180 143C192 143 198 140 206 140C214 140 220 144 232 144C256 144 260 122 248 110C238 99 228 89 224 81C220 74 214 71 206 71Z" />
        <text x="172" y="131" fontFamily="Liberation Sans, sans-serif" fontWeight="700" fontSize="52" fill="#dedede">du</text>
        <text x="266" y="136" fontFamily="Noto Sans CJK SC, sans-serif" fontWeight="900" fontSize="65">经验</text>
        <text x="20" y="191" fontFamily="Noto Sans, sans-serif" fontWeight="400" fontSize="44">jingyan.baidu.com</text>
      </Watermark>
    </Shell>
  );
}
